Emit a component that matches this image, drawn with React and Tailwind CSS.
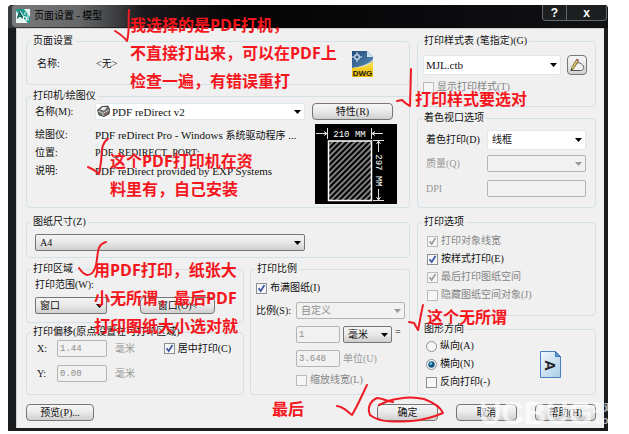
import React, { useState } from "react";
import clsx from "clsx";
import { twMerge } from "tailwind-merge";

const Group = ({ title, className, children }) => {
  return (
    <fieldset className={clsx("min-w-0 rounded-sm border border-[#d3e0e6]", className)}>
      <legend className="ml-1 px-0.5 leading-3">{title}</legend>
      {children}
    </fieldset>
  );
};

const Button = ({ className, children, ...rest }) => {
  return (
    <button
      type="button"
      className={twMerge(
        "flex h-[17px] items-center justify-center rounded-sm border border-[#767676] bg-linear-to-b from-[#f6f6f6] via-[#e9e9e9] to-[#cfcfcf] leading-3 whitespace-nowrap",
        className
      )}
      {...rest}
    >
      {children}
    </button>
  );
};

const selectStyles = {
  white: "border-[#e3e6ea] bg-white",
  grey: "border-[#767676] bg-linear-to-b from-[#f4f4f4] via-[#e8e8e8] to-[#cfcfcf]",
  off: "border-[#b4b4b4] bg-[#f1f1f1] text-[#8d8d8d]",
};

const Select = ({ id, options, look = "white", className, pad = "pl-1", ...rest }) => {
  return (
    <div className={twMerge("relative h-[17px]", className)}>
      <select
        id={id}
        className={clsx(
          "block h-full w-full appearance-none rounded-xs border pr-4 leading-3 opacity-100",
          selectStyles[look],
          pad
        )}
        disabled={look === "off"}
        {...rest}
      >
        {options.map((o) => (
          <option key={o}>{o}</option>
        ))}
      </select>
      <svg
        className={clsx(
          "pointer-events-none absolute top-1/2 right-1 -mt-0.5 h-1 w-[7px]",
          look === "off" ? "fill-[#999]" : "fill-black"
        )}
        viewBox="0 0 7 4"
      >
        <path d="M0 0h7L3.500 4z" />
      </svg>
    </div>
  );
};

const Check = ({ label, type = "checkbox", disabled, className, ...rest }) => {
  return (
    <label className={clsx("flex items-center gap-[3px]", disabled && "text-[#858585]", className)}>
      <span className="relative block size-[11px]">
        <input
          type={type}
          disabled={disabled}
          className={clsx(
            "peer block size-[11px] appearance-none border bg-[#f6f6f6]",
            type === "radio" ? "rounded-full" : "",
            disabled ? "border-[#bbb]" : "border-[#8a8f94]"
          )}
          {...rest}
        />
        {type === "radio" ? (
          <svg className="pointer-events-none absolute inset-0 hidden size-[11px] peer-checked:block" viewBox="0 0 11 11">
            <circle cx="5.500" cy="5.500" r="3.200" fill="#12567f" />
            <circle cx="4.800" cy="4.600" r="1.300" fill="#6fc6ee" />
          </svg>
        ) : (
          <svg className="pointer-events-none absolute inset-0 hidden size-[11px] peer-checked:block" viewBox="0 0 11 11">
            <path
              d="M2.500 5.200 4.700 8 8.500 2"
              fill="none"
              stroke={disabled ? "#9c9c9c" : "#3b55a5"}
              strokeWidth="1.700"
            />
          </svg>
        )}
      </span>
      <span className="whitespace-nowrap">{label}</span>
    </label>
  );
};

const NumberBox = ({ className, ...rest }) => {
  return (
    <input
      disabled
      className={clsx(
        "block h-[17px] rounded-xs border border-[#b4b4b4] bg-[#f1f1f1] px-0.5 font-['Liberation_Mono',monospace] text-[9px] leading-3 text-[#8d8d8d]",
        className
      )}
      {...rest}
    />
  );
};

const AppIcon = () => (
  <svg className="size-[14px]" viewBox="0 0 14 14">
    <rect width="14" height="14" fill="#e4f3f0" />
    <path d="M0 0h8l6 8v6h-2L0 2z" fill="#1d9c8e" />
    <path d="M1.500 9.500 4 2.500 6.500 9.500M2.300 7.200h3.400" fill="none" stroke="#0d5d58" strokeWidth="1.500" />
    <path d="M4 2 8 8" stroke="#fff" strokeWidth="1" />
    <circle cx="9" cy="9.500" r="1.800" fill="none" stroke="#fff" strokeWidth="1.100" />
    <path d="M9 3v3M12 5v7M2 12h4" stroke="#e4f3f0" strokeWidth="1" />
  </svg>
);

const DwgIcon = () => (
  <svg className="h-[26px] w-[23px]" viewBox="0 0 23 26">
    <defs>
      <linearGradient id="dwgBlue" x1="0" y1="0" x2="1" y2="1">
        <stop offset="0" stopColor="#1f4a7a" />
        <stop offset="1" stopColor="#5f8fb8" />
      </linearGradient>
      <linearGradient id="dwgYellow" x1="0" y1="0" x2="0" y2="1">
        <stop offset="0" stopColor="#fbe04a" />
        <stop offset="1" stopColor="#e9b800" />
      </linearGradient>
    </defs>
    <path d="M1 0h15l6 6v12H1z" fill="url(#dwgBlue)" />
    <path d="M16 0v6h6z" fill="#cfe0ee" />
    <path d="M1 17C9 16 18 14 22 10v16H1z" fill="url(#dwgYellow)" />
    <path d="M1 17C9 16 18 13 22 8v2c-4 5-13 7-21 7z" fill="#fff" opacity=".6" />
    <path d="M6 1v10M1 6h10" stroke="#e8f1f8" strokeWidth="1" />
    <rect x="4" y="4" width="4" height="4" fill="#2a5788" stroke="#e8f1f8" />
    <text x="11.500" y="24.500" textAnchor="middle" fontSize="8" fontWeight="700" fontFamily="Liberation Sans, sans-serif" fill="#1a1a1a">
      DWG
    </text>
  </svg>
);

const PrinterIcon = () => (
  <svg className="pointer-events-none absolute top-[2px] left-[2px] h-3 w-[13px]" viewBox="0 0 13 12">
    <path d="M0.500 5 5 1.500 11 1l2 4-1 4-5 2.500L2 10z" fill="#6f6f6f" stroke="#333" strokeWidth=".8" />
    <path d="M3 4.500 6 2l4 .5L7 5.500z" fill="#f2f2f2" />
    <path d="M1 6l5 2v3M6.500 8 12 5" fill="none" stroke="#d8d8d8" strokeWidth=".9" />
    <path d="M3 8.500l2 1" stroke="#4d9a4d" strokeWidth="1.200" />
    <path d="M8.500 8.500l2-1" stroke="#b04a4a" strokeWidth="1" />
  </svg>
);

const PencilIcon = () => (
  <svg className="h-[14px] w-4" viewBox="0 0 16 14">
    <path d="M2 12.500 8 5c2-1 4 .5 5.500 2 2.500 2.500 1 5.500-2 5.500z" fill="#f2f2f2" stroke="#555" strokeWidth="1" />
    <path d="M2 12.500 2.800 9.500 7.800 1l2 1.200L4.800 10.500z" fill="#e6cc62" stroke="#55482a" strokeWidth=".7" />
    <path d="M7.100 2.200 7.800 1l2 1.200-.7 1.200z" fill="#b0606e" />
    <path d="M2 12.500l.4-1.700 1 .6z" fill="#222" />
  </svg>
);

const PageIcon = () => (
  <svg className="h-[27px] w-[21px]" viewBox="0 0 21 27">
    <defs>
      <linearGradient id="pageFill" x1="0" y1="0" x2="1" y2="1">
        <stop offset="0" stopColor="#f1f8fd" />
        <stop offset="1" stopColor="#a9cde6" />
      </linearGradient>
    </defs>
    <path d="M.5.5h15l5 5v21H.5z" fill="url(#pageFill)" stroke="#4a7fc0" />
    <path d="M15.500.5v5h5z" fill="#5b97d6" stroke="#3f74b8" />
    <text transform="translate(5 9) rotate(90)" fontSize="15" fontWeight="700" fontFamily="Liberation Sans, sans-serif" fill="#222">
      A
    </text>
  </svg>
);

const PaperPreview = () => (
  <svg className="h-20 w-[82px] shrink-0" viewBox="0 0 82 80">
    <defs>
      <pattern id="hatch" width="4" height="4" patternUnits="userSpaceOnUse" patternTransform="rotate(45)">
        <path d="M1 0v4" stroke="#c4c4c4" strokeWidth="1.300" />
      </pattern>
    </defs>
    <rect width="82" height="80" fill="#000" />
    <rect x="13.500" y="17" width="43" height="59.500" fill="url(#hatch)" stroke="#fff" strokeWidth="1.500" />
    <g stroke="#e0e0e0" fill="none">
      <path d="M1 9.500h11M12.500 4v11M9 7.500l3 2-3 2M56.500 4v11M57 9.500h11M60 7.500l-3 2 3 2" />
      <path d="M58 16.500h11M58 76.500h11M63.500 17v11M61.500 20l2-3 2 3M63.500 65v11M61.500 73l2 3 2-3" />
    </g>
    <g fill="#fff" fontSize="9" fontFamily="Liberation Mono, monospace">
      <text x="34.500" y="12.500" textAnchor="middle">210 MM</text>
      <text transform="translate(60.500 46.500) rotate(90)" textAnchor="middle">297 MM</text>
    </g>
  </svg>
);

const notes = [
  { pos: "left-[130px] top-[11px]", lines: ["我选择的是PDF打机，", "不直接打出来，可以在PDF上", "检查一遍，有错误重打"] },
  { pos: "left-[415px] top-[85px]", lines: ["打印样式要选对"] },
  { pos: "left-[110px] top-[147px]", lines: ["这个PDF打印机在资", "料里有，自己安装"] },
  { pos: "left-[94px] top-[256px]", lines: ["用PDF打印，纸张大", "小无所谓，最后PDF", "打印图纸大小选对就"] },
  { pos: "left-[427px] top-[303px]", lines: ["这个无所谓"] },
  { pos: "left-[272px] top-[395px]", lines: ["最后"] },
];

const Notes = () => {
  return (
    <div className="pointer-events-none absolute inset-0 font-['Open_Sans','Noto_Sans_CJK_SC',sans-serif] text-[16px] leading-7 font-bold text-[#f5161d]">
      {notes.map((note) => (
        <p key={note.pos} className={clsx("absolute whitespace-nowrap", note.pos)}>
          {note.lines.map((line) => (
            <span key={line} className="block h-7">
              {line}
            </span>
          ))}
        </p>
      ))}
      <svg
        className="absolute top-0 left-0 h-[434px] w-[629px] fill-none stroke-[#ee1c25] stroke-2"
        viewBox="0 0 629 434"
        strokeLinecap="round"
        strokeLinejoin="round"
      >
        <path d="M129 10C128 20 130 30 127 41 124 37 120 34 115 31" />
        <path d="M411 69 410 106C406 104 404 102 402 100L397 101" />
        <path d="M108 139C101 143 102 152 101 162L99 174C96 171 93 169 88 167" />
        <path d="M106 242C98 244 98 251 97 259 96 268 93 275 87 275 83 274 81 271 79 268" />
        <path d="M423 305C421 313 420 321 418 330L414 323 409 322" />
        <path d="M367 385C362 395 358 405 352 415 347 412 345 407 337 406" />
        <path d="M393 402C386 401 382 398 377 398 370 401 367 408 370 415 380 423 397 422 412 421 424 420 436 416 443 413 440 406 432 402 424 399 412 396 398 398 388 401L379 405" />
      </svg>
    </div>
  );
};

const App = () => {
  const [direction, setDirection] = useState("landscape");

  return (
    <main className="relative bg-white pt-[5px] pr-[21px] pb-1 pl-2 font-['Liberation_Serif','Noto_Sans_CJK_SC',serif] text-[10px] leading-3 text-[#111]">
      <div className="overflow-hidden rounded-t-sm bg-[#1b1c1e] pr-1 pb-[3px] pl-2">
        <header className="-mr-1 -ml-2 flex h-[23px] items-start bg-linear-to-r from-[#3a3b3d] via-[#050506] via-40% to-[#101113] pl-2">
          <div className="-ml-1 flex items-center gap-1 rounded bg-linear-to-r from-[#77797b] via-[#66686a] to-transparent pt-1 pr-10 pb-1 pl-1">
            <AppIcon />
            <h1 className="text-[10px] leading-3 whitespace-nowrap text-black">页面设置 - 模型</h1>
          </div>
          <div className="mr-px ml-auto flex overflow-hidden rounded-b-sm border border-t-0 border-[#65676a] bg-[#1d1e20] font-['Liberation_Sans',sans-serif] text-[12px] font-bold text-white">
            <button type="button" className="h-[15px] w-6 border-r border-[#65676a]">?</button>
            <button type="button" className="h-[15px] w-[39px]">x</button>
          </div>
        </header>

        <form className="border-t border-l border-[#cfd2d4] bg-[#f0f0f0] pt-[6px] pr-2 pb-[7px] pl-[9px]" onSubmit={(e) => e.preventDefault()}>
          <div className="flex gap-[7px]">
            <div className="min-w-0 flex-1">
              <Group title="页面设置">
                <div className="flex items-center pt-1 pr-[35px] pb-[7px] pl-2.5">
                  <span className="w-[59px]">名称:</span>
                  <span>&lt;无&gt;</span>
                  <span className="ml-auto">
                    <DwgIcon />
                  </span>
                </div>
              </Group>

              <Group title="打印机/绘图仪" className="mt-[5px]">
                <div className="pt-px pr-3 pb-[3px] pl-2">
                  <div className="flex items-center">
                    <label htmlFor="printer" className="w-[60px]">名称(M):</label>
                    <div className="relative flex-1">
                      <Select id="printer" options={["PDF reDirect v2"]} pad="pl-4 text-[11px]" />
                      <PrinterIcon />
                    </div>
                    <Button className="mr-1 ml-[7px] w-[81px]">特性(R)</Button>
                  </div>
                  <div className="mt-1 flex">
                    <dl className="grid min-w-0 flex-1 auto-rows-[18px] grid-cols-[60px_1fr] content-start pt-0.5 leading-[18px] whitespace-nowrap">
                      <dt>绘图仪:</dt>
                      <dd className="text-[11px]">
                        PDF reDirect Pro - Windows <span className="text-[10px]">系统驱动程序</span> ...
                      </dd>
                      <dt>位置:</dt>
                      <dd className="text-[10px]">PDF_REDIRECT_PORT:</dd>
                      <dt>说明:</dt>
                      <dd className="text-[11px]">PDF reDirect provided by EXP Systems</dd>
                    </dl>
                    <PaperPreview />
                  </div>
                </div>
              </Group>

              <Group title="图纸尺寸(Z)" className="mt-2">
                <div className="pt-[6px] pr-[104px] pb-[6px] pl-2">
                  <Select id="paper" aria-label="图纸尺寸" look="grey" options={["A4"]} />
                </div>
              </Group>

              <div className="mt-[5px] flex gap-[6px]">
                <div className="min-w-0 flex-1">
                  <Group title="打印区域">
                    <div className="pt-1 pr-7 pb-2 pl-2">
                      <label htmlFor="range">打印范围(W):</label>
                      <div className="mt-[6px] flex justify-between">
                        <Select id="range" look="grey" options={["窗口"]} className="w-[72px]" />
                        <Button className="w-[75px]">窗口(O)&lt;</Button>
                      </div>
                    </div>
                  </Group>
                  <Group title="打印偏移(原点设置在可打印区域)" className="mt-[3px]">
                    <div className="grid grid-cols-[20px_50px_1fr] items-center gap-y-2 pt-0.5 pr-3 pb-3 pl-2.5">
                      <label htmlFor="offX">X:</label>
                      <NumberBox id="offX" defaultValue="1.44" />
                      <div className="flex items-center justify-between pl-2">
                        <span className="text-[#999]">毫米</span>
                        <Check label="居中打印(C)" defaultChecked />
                      </div>
                      <label htmlFor="offY">Y:</label>
                      <NumberBox id="offY" defaultValue="0.00" />
                      <span className="pl-2 text-[#999]">毫米</span>
                    </div>
                  </Group>
                </div>

                <Group title="打印比例" className="w-[160px]">
                  <div className="grid grid-cols-[40px_1fr] items-center gap-y-[7px] pt-[6px] pr-1 pl-[5px]">
                    <Check label="布满图纸(I)" defaultChecked className="col-span-2 h-[14px]" />
                    <label htmlFor="scale">比例(S):</label>
                    <Select id="scale" look="off" options={["自定义"]} />
                    <div className="col-start-2 flex gap-[3px]">
                      <NumberBox aria-label="图纸" defaultValue="1" className="w-11" />
                      <Select id="unit" aria-label="毫米" look="grey" options={["毫米"]} className="w-[49px]" />
                      <span>=</span>
                    </div>
                    <div className="col-start-2 flex items-center gap-[3px] text-[#999]">
                      <NumberBox id="units" defaultValue="3.648" className="w-11" />
                      <label htmlFor="units">单位(U)</label>
                    </div>
                    <Check label="缩放线宽(L)" disabled className="col-start-2" />
                  </div>
                </Group>
              </div>
            </div>

            <div className="w-[179px] shrink-0">
              <Group title="打印样式表 (笔指定)(G)">
                <div className="pt-2 pr-2 pb-3 pl-[5px]">
                  <div className="flex items-center gap-[6px]">
                    <Select id="ctb" aria-label="打印样式表" options={["MJL.ctb"]} className="h-5 flex-1" pad="pl-0.5 text-[11px]" />
                    <Button aria-label="编辑" className="h-5 w-5">
                      <PencilIcon />
                    </Button>
                  </div>
                  <Check label="显示打印样式(T)" disabled className="mt-[5px] h-[14px]" />
                </div>
              </Group>

              <Group title="着色视口选项" className="mt-[5px]">
                <div className="grid grid-cols-[61px_1fr] items-center pt-[6px] pr-[9px] pb-2.5 pl-2">
                  <label htmlFor="shade">着色打印(D)</label>
                  <Select id="shade" options={["线框"]} className="h-5" />
                  <label htmlFor="quality" className="mt-[5px] text-[#999]">质量(Q)</label>
                  <Select id="quality" look="off" options={[""]} className="mt-[5px]" />
                  <label htmlFor="dpi" className="mt-2 text-[#999]">DPI</label>
                  <NumberBox id="dpi" className="mt-2 w-full" />
                </div>
              </Group>

              <Group title="打印选项" className="mt-2">
                <div className="pt-1 pb-[11px] pl-[9px]">
                  <Check label="打印对象线宽" disabled defaultChecked className="h-[18px]" />
                  <Check label="按样式打印(E)" defaultChecked className="h-[18px]" />
                  <Check label="最后打印图纸空间" disabled defaultChecked className="h-[18px]" />
                  <Check label="隐藏图纸空间对象(J)" disabled className="h-[18px]" />
                </div>
              </Group>

              <Group title="图形方向" className="mt-[7px]">
                <div className="flex items-center justify-between pt-0.5 pr-[34px] pb-[3px] pl-2">
                  <div>
                    <Check
                      type="radio"
                      name="direction"
                      label="纵向(A)"
                      checked={direction === "portrait"}
                      onChange={() => setDirection("portrait")}
                      className="h-[18px]"
                    />
                    <Check
                      type="radio"
                      name="direction"
                      label="横向(N)"
                      checked={direction === "landscape"}
                      onChange={() => setDirection("landscape")}
                      className="h-[18px]"
                    />
                    <Check label="反向打印(-)" className="h-[18px]" />
                  </div>
                  <PageIcon />
                </div>
              </Group>
            </div>
          </div>

          <div className="mt-[9px] flex">
            <Button className="w-[68px]">预览(P)...</Button>
            <div className="ml-auto flex gap-[18px]">
              <Button className="w-[61px]">确定</Button>
              <Button className="w-[61px]">取消</Button>
              <Button className="w-[61px]">帮助(H)</Button>
            </div>
          </div>
        </form>
      </div>

      <div className="pointer-events-none absolute top-[398px] left-[479px] flex items-center font-['Liberation_Sans','Noto_Sans_CJK_SC',sans-serif] font-bold whitespace-nowrap text-white/65">
        <span className="text-[31px] leading-8">UCBUG</span>
        <span className="text-[11px] leading-3">
          游戏网
          <br />
          .com
        </span>
      </div>
      <Notes />
    </main>
  );
};

export default App;
